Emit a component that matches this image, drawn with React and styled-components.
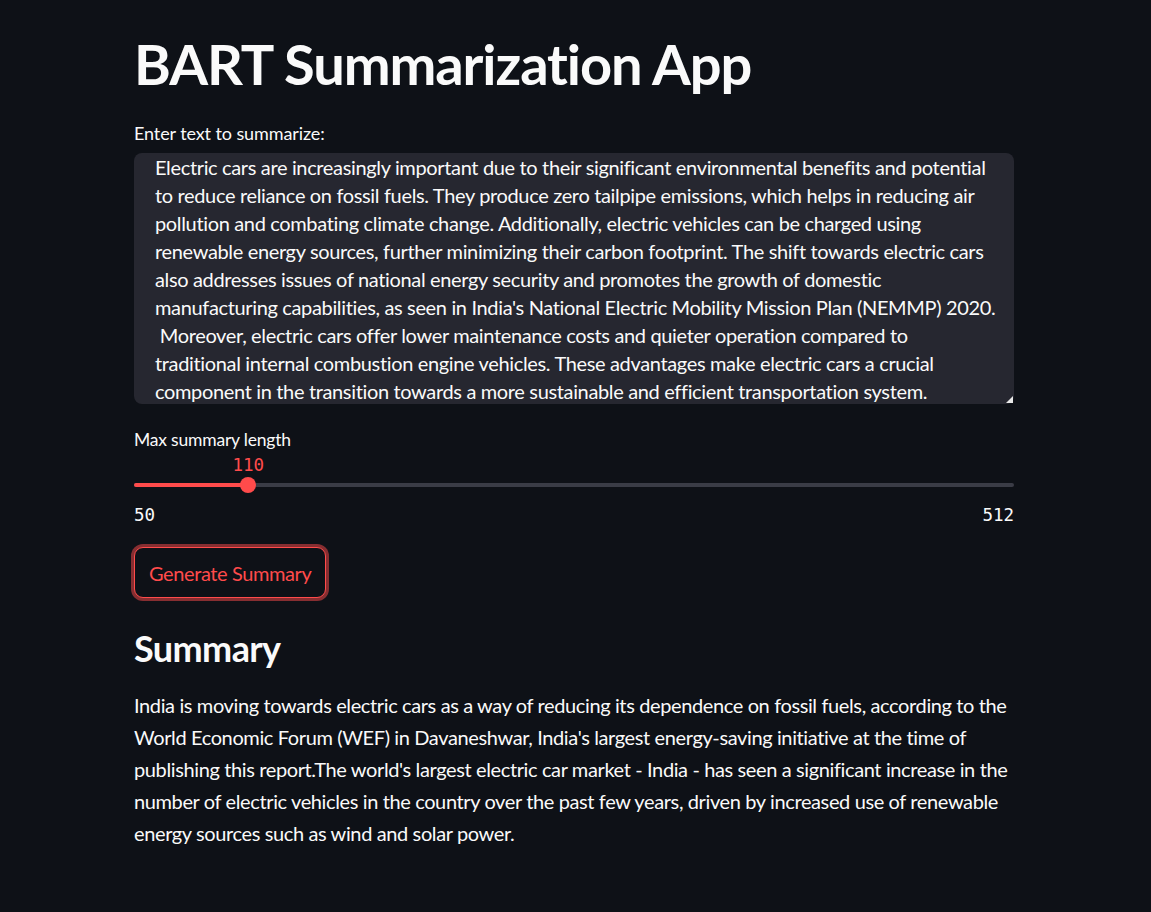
import React from "react";
import styled, { createGlobalStyle } from "styled-components";

const GlobalStyle = createGlobalStyle`
  html, body {
    margin: 0;
    padding: 0;
    background: #0e1117;
  }
  body {
    font-family: "Lato", "Noto Sans", sans-serif;
    color: #fafafa;
    letter-spacing: -0.35px;
  }
`;

const Main = styled.main`
  width: 880px;
  margin-left: 134px;
  padding: 24px 0 60px;
  display: flex;
  flex-direction: column;
`;

const Title = styled.h1`
  margin: 0;
  font-size: 56px;
  line-height: 80px;
  font-weight: 700;
  letter-spacing: -1.1px;
`;

const Label = styled.label`
  display: block;
  font-size: ${(p) => p.size || 17}px;
  line-height: 22px;
  margin-top: ${(p) => p.mt || 0}px;
  color: #fafafa;
  letter-spacing: ${(p) => p.ls ?? -0.2}px;
`;

const AreaWrap = styled.div`
  position: relative;
  margin-top: 9px;
`;

const TextArea = styled.textarea`
  display: block;
  box-sizing: border-box;
  width: 100%;
  height: 251px;
  margin: 0;
  padding: 0 20px 0 21px;
  border: none;
  border-radius: 8px;
  background: #262730;
  color: #fafafa;
  font-family: inherit;
  font-size: 20px;
  line-height: 28px;
  letter-spacing: -0.35px;
  white-space: pre;
  overflow: hidden;
  resize: none;
  outline: none;
`;

const Grip = styled.span`
  position: absolute;
  right: 1px;
  bottom: 1px;
  width: 0;
  height: 0;
  border-left: 7px solid transparent;
  border-bottom: 7px solid #e8e8e8;
`;

const Slider = styled.div`
  margin-top: 4px;
  display: flex;
  flex-direction: column;
`;

const ValueRow = styled.div`
  position: relative;
  height: 20px;
`;

const Mono = styled.span`
  font-family: "DejaVu Sans Mono", "Liberation Mono", monospace;
  font-size: 17.5px;
  line-height: 20px;
  letter-spacing: 0;
  color: ${(p) => p.color || "#fafafa"};
`;

const ThumbValue = styled(Mono)`
  position: absolute;
  top: 0;
  transform: translateX(-50%);
`;

const TrackRow = styled.div`
  position: relative;
  height: 20px;
  display: flex;
  align-items: center;
`;

const Track = styled.div`
  position: relative;
  width: 100%;
  height: 4px;
  border-radius: 2px;
  background: #3a3c46;
`;

const Fill = styled.div`
  height: 100%;
  border-radius: 2px;
  background: #ff4b4b;
`;

const Thumb = styled.div`
  position: absolute;
  top: 50%;
  width: 16px;
  height: 16px;
  border-radius: 50%;
  background: #ff4b4b;
  transform: translate(-50%, -50%);
`;

const Ticks = styled.div`
  margin-top: 10px;
  display: flex;
  justify-content: space-between;
  height: 20px;
`;

const Button = styled.button`
  align-self: flex-start;
  margin-top: 22px;
  height: 51px;
  padding: 0 14px;
  border: 1px solid #ff4b4b;
  border-radius: 9px;
  background: #0e1117;
  color: #ff4b4b;
  font-family: inherit;
  font-size: 20px;
  letter-spacing: -0.4px;
  box-shadow: 0 0 0 3px rgba(255, 75, 75, 0.5);
  cursor: pointer;
`;

const Heading = styled.h2`
  margin: 28px 0 0;
  font-size: 36px;
  line-height: 44px;
  font-weight: 700;
  letter-spacing: -0.6px;
`;

const Paragraph = styled.p`
  margin: 19px 0 0;
  font-size: 20px;
  line-height: 32px;
  white-space: nowrap;
  letter-spacing: -0.38px;
`;

const sourceText = [
  "Electric cars are increasingly important due to their significant environmental benefits and potential",
  "to reduce reliance on fossil fuels. They produce zero tailpipe emissions, which helps in reducing air",
  "pollution and combating climate change. Additionally, electric vehicles can be charged using",
  "renewable energy sources, further minimizing their carbon footprint. The shift towards electric cars",
  "also addresses issues of national energy security and promotes the growth of domestic",
  "manufacturing capabilities, as seen in India's National Electric Mobility Mission Plan (NEMMP) 2020.",
  " Moreover, electric cars offer lower maintenance costs and quieter operation compared to",
  "traditional internal combustion engine vehicles. These advantages make electric cars a crucial",
  "component in the transition towards a more sustainable and efficient transportation system.",
].join("\n");

const summaryLines = [
  "India is moving towards electric cars as a way of reducing its dependence on fossil fuels, according to the",
  "World Economic Forum (WEF) in Davaneshwar, India's largest energy-saving initiative at the time of",
  "publishing this report.The world's largest electric car market - India - has seen a significant increase in the",
  "number of electric vehicles in the country over the past few years, driven by increased use of renewable",
  "energy sources such as wind and solar power.",
];

const MIN = 50;
const MAX = 512;
const VALUE = 110;

export default function App() {
  const pct = ((VALUE - MIN) / (MAX - MIN)) * 100;

  return (
    <>
      <GlobalStyle />
      <Main>
        <Title>BART Summarization App</Title>

        <Label mt={18} size={18} ls={-0.1}>Enter text to summarize:</Label>
        <AreaWrap>
          <TextArea readOnly value={sourceText} />
          <Grip />
        </AreaWrap>

        <Label mt={25} size={17.5}>Max summary length</Label>
        <Slider>
          <ValueRow>
            <ThumbValue color="#ff4b4b" style={{ left: `${pct}%` }}>
              {VALUE}
            </ThumbValue>
          </ValueRow>
          <TrackRow>
            <Track>
              <Fill style={{ width: `${pct}%` }} />
              <Thumb style={{ left: `${pct}%` }} />
            </Track>
          </TrackRow>
          <Ticks>
            <Mono>{MIN}</Mono>
            <Mono>{MAX}</Mono>
          </Ticks>
        </Slider>

        <Button>Generate Summary</Button>

        <Heading>Summary</Heading>
        <Paragraph>
          {summaryLines.map((line, i) => (
            <React.Fragment key={i}>
              {line}
              {i < summaryLines.length - 1 && <br />}
            </React.Fragment>
          ))}
        </Paragraph>
      </Main>
    </>
  );
}
